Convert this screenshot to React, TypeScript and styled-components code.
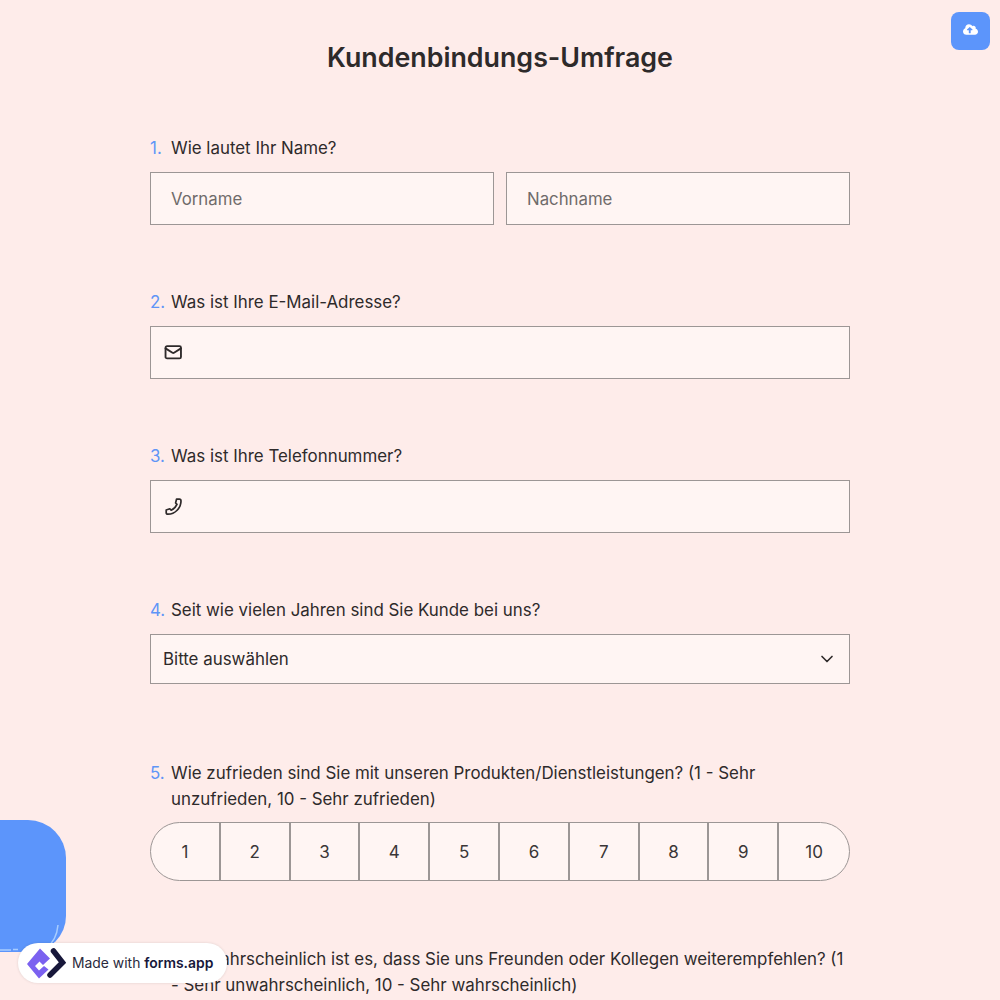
import React from "react";
import styled, { createGlobalStyle } from "styled-components";
import { ChevronDown, Mail } from "lucide-react";
import { FaCloudUploadAlt } from "react-icons/fa";

const GlobalStyle = createGlobalStyle`
  html, body {
    margin: 0;
    padding: 0;
    height: 100%;
    overflow: hidden;
    background: #feecea;
  }
  * {
    box-sizing: border-box;
  }
`;

const scale = [1, 2, 3, 4, 5, 6, 7, 8, 9, 10];

function Question(props: { n: number; gap?: number; children?: React.ReactNode; text: string }) {
  return (
    <QuestionBlock $gap={props.gap ?? 63}>
      <Label>
        <Num>{props.n}.</Num>
        <LabelText>{props.text}</LabelText>
      </Label>
      {props.children}
    </QuestionBlock>
  );
}

export default function App() {
  return (
    <Page>
      <GlobalStyle />
      <Title>Kundenbindungs-Umfrage</Title>
      <Form>
        <Question n={1} text="Wie lautet Ihr Name?">
          <NameRow>
            <Field>
              <Placeholder>Vorname</Placeholder>
            </Field>
            <Field>
              <Placeholder>Nachname</Placeholder>
            </Field>
          </NameRow>
        </Question>
        <Question n={2} text="Was ist Ihre E-Mail-Adresse?">
          <IconField>
            <Mail size={18.5} strokeWidth={2.4} />
          </IconField>
        </Question>
        <Question n={3} text="Was ist Ihre Telefonnummer?">
          <IconField>
            <svg width="19" height="19" viewBox="0 0 19 19" fill="none" stroke="currentColor" strokeWidth="1.7" strokeLinejoin="round">
              <path d="M12.5 2.2 L15.4 2.2 Q17 2.2 17 4 C17 11 11 17.2 4 17.2 Q2.2 17.2 2.2 15.4 L2.2 13 L5.8 11.8 L7.2 13.2 C9.8 12 11.8 10 13 7.4 L11.6 6 Z" />
            </svg>
          </IconField>
        </Question>
        <Question n={4} gap={75} text="Seit wie vielen Jahren sind Sie Kunde bei uns?">
          <Select>
            Bitte auswählen
            <ChevronDown size={20} strokeWidth={2} />
          </Select>
        </Question>
        <Question
          n={5}
          gap={64}
          text="Wie zufrieden sind Sie mit unseren Produkten/Dienstleistungen? (1 - Sehr unzufrieden, 10 - Sehr zufrieden)"
        >
          <Scale>
            {scale.map((v) => (
              <ScaleItem key={v}>{v}</ScaleItem>
            ))}
          </Scale>
        </Question>
        <Question
          n={6}
          text="Wie wahrscheinlich ist es, dass Sie uns Freunden oder Kollegen weiterempfehlen? (1 - Sehr unwahrscheinlich, 10 - Sehr wahrscheinlich)"
        />
      </Form>

      <UploadButton>
        <FaCloudUploadAlt size={15} />
      </UploadButton>
      <Blob>
        <svg width="66" height="132" viewBox="0 0 66 132" fill="none" stroke="#a8cdff" strokeWidth="1.5">
          <path d="M58 105 C57 116 52 124 46 128" />
          <path d="M0 130 L11 130 M13 129.5 L18 129.5 M35 129.5 L44 129" />
        </svg>
      </Blob>
      <Badge>
        <svg width="40" height="31" viewBox="0 0 40 31">
          <path d="M14 0.5 L24 10.5 L17 17 L13.5 13.5 L9 18 L13 22.5 L18 18 L22.5 21.5 L13 30.5 L1 16 Z" fill="#7b61f0" />
          <path d="M27.5 3 L36.5 14.5 L24 27" fill="none" stroke="#17173a" strokeWidth="5.5" strokeLinecap="round" />
        </svg>
        <BadgeText>
          Made with <b>forms.app</b>
        </BadgeText>
      </Badge>
    </Page>
  );
}

const Page = styled.div`
  position: relative;
  height: 1000px;
  overflow: hidden;
  background: #feecea;
  font-family: Inter, "Liberation Sans", sans-serif;
  color: #2e2a2a;
`;

const Title = styled.h1`
  margin: 0;
  padding-top: 39px;
  font-size: 26.8px;
  line-height: 36px;
  font-weight: 600;
  text-align: center;
`;

const Form = styled.div`
  width: 700px;
  margin: 59px auto 0;
`;

const QuestionBlock = styled.div<{ $gap: number }>`
  margin-bottom: ${(p) => p.$gap}px;
`;

const Label = styled.div`
  display: flex;
  font-size: 16.9px;
  line-height: 26px;
  padding-top: 1px;
  margin-bottom: 11px;
`;

const Num = styled.span`
  flex: 0 0 21px;
  color: #5f95f7;
`;

const LabelText = styled.span`
  flex: 1;
`;

const NameRow = styled.div`
  display: grid;
  grid-template-columns: 1fr 1fr;
  gap: 12px;
`;

const Field = styled.div`
  height: 53px;
  display: flex;
  align-items: center;
  padding-left: 20px;
  background: #fff5f3;
  border: 1px solid #9c9695;
`;

const IconField = styled(Field)`
  padding-left: 13px;
  color: #2e2a2a;
`;

const Placeholder = styled.span`
  font-size: 16.8px;
  color: #6f6b6a;
`;

const Select = styled.div`
  height: 50px;
  display: flex;
  align-items: center;
  justify-content: space-between;
  padding: 0 12px;
  font-size: 16.9px;
  background: #fff5f3;
  border: 1px solid #9c9695;
`;

const Scale = styled.div`
  display: grid;
  grid-template-columns: repeat(10, 1fr);
  height: 59px;
  margin-top: -1px;
  background: #fff5f3;
  border: 1px solid #9c9695;
  border-radius: 30px;
  overflow: hidden;
`;

const ScaleItem = styled.div`
  display: flex;
  align-items: center;
  justify-content: center;
  font-size: 17px;
  color: #3a3636;
  border-right: 2px solid #9c9695;
  &:last-child {
    border-right: none;
  }
`;

const UploadButton = styled.div`
  position: absolute;
  top: 12px;
  left: 951px;
  width: 39px;
  height: 38px;
  padding-bottom: 3px;
  display: flex;
  align-items: center;
  justify-content: center;
  border-radius: 8px;
  background: #5c95fb;
  color: #fff;
`;

const Blob = styled.div`
  position: absolute;
  left: 0;
  top: 820px;
  width: 66px;
  height: 132px;
  border-radius: 0 38px 36px 0;
  background: #5c95fb;
`;

const Badge = styled.div`
  position: absolute;
  left: 18px;
  top: 943px;
  width: 209px;
  height: 40px;
  display: flex;
  align-items: center;
  gap: 6px;
  padding-left: 8px;
  border-radius: 20px;
  background: #fff;
  box-shadow: 0 0 3px rgba(0, 0, 0, 0.12);
`;

const BadgeText = styled.span`
  font-size: 13.9px;
  color: #2a2a3c;
  white-space: nowrap;
  b {
    font-weight: 600;
    color: #17173a;
  }
`;
